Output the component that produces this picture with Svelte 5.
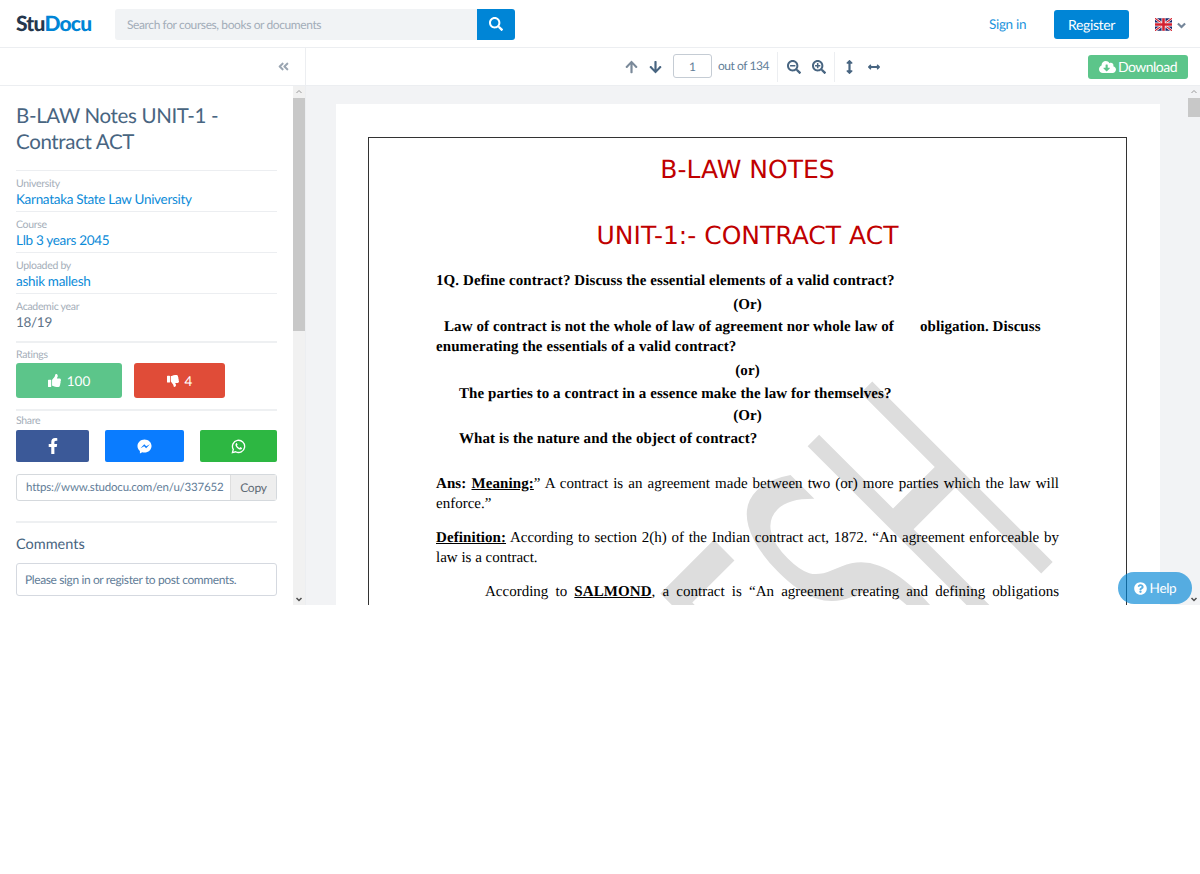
<script lang="ts">
  const details = [
    { label: 'University', value: 'Karnataka State Law University', link: true },
    { label: 'Course', value: 'Llb 3 years 2045', link: true },
    { label: 'Uploaded by', value: 'ashik mallesh', link: true },
    { label: 'Academic year', value: '18/19', link: false }
  ];
  const magnifier =
    'M505 476.7L476.7 505c-9.4 9.4-24.6 9.4-33.9 0L343 405.3c-4.5-4.5-7-10.6-7-17V372c-35.3 27.6-79.7 44-128 44C93.1 416 0 322.9 0 208S93.1 0 208 0s208 93.1 208 208c0 48.3-16.4 92.7-44 128h16.3c6.4 0 12.5 2.5 17 7l99.7 99.7c9.3 9.4 9.3 24.6 0 34zM344 208c0-75.2-60.8-136-136-136S72 132.8 72 208s60.8 136 136 136 136-60.8 136-136z';
</script>

<div class="app">
  <header class="topbar">
    <a class="logo" href="#top"><span>Stu</span><b>Docu</b></a>
    <form class="search">
      <div class="search-input">Search for courses, books or documents</div>
      <button class="search-btn" type="button" aria-label="Search">
        <svg viewBox="0 0 512 512" width="14" height="14"><path fill="#fff" d={magnifier} /></svg>
      </button>
    </form>
    <a class="signin" href="#top">Sign in</a>
    <button class="register" type="button">Register</button>
    <svg class="flag" viewBox="0 0 60 44" width="17" height="13" aria-hidden="true">
      <rect width="60" height="44" fill="#16246a" />
      <path d="M0 0L60 44M60 0L0 44" stroke="#fff" stroke-width="9" />
      <path d="M0 0L60 44M60 0L0 44" stroke="#d3202f" stroke-width="4" />
      <path d="M30 0V44M0 22H60" stroke="#fff" stroke-width="14" />
      <path d="M30 0V44M0 22H60" stroke="#d3202f" stroke-width="9" />
    </svg>
    <svg class="caret" viewBox="0 0 10 7" width="9" height="7" aria-hidden="true">
      <path d="M1 1.2l4 4 4-4" fill="none" stroke="#75869a" stroke-width="2.4" />
    </svg>
  </header>

  <div class="toolbar">
    <div class="tool-side">
      <svg viewBox="0 0 448 512" width="11" height="13"><path fill="#9aa5b1" d="M223.7 239l136-136c9.4-9.4 24.6-9.4 33.9 0l22.6 22.6c9.4 9.4 9.4 24.6 0 33.9L319.9 256l96.4 96.4c9.4 9.4 9.4 24.6 0 33.9L393.7 409c-9.4 9.4-24.6 9.4-33.9 0l-136-136c-9.5-9.4-9.5-24.6-.1-34zm-192 34l136 136c9.4 9.4 24.6 9.4 33.9 0l22.6-22.6c9.4-9.4 9.4-24.6 0-33.9L127.9 256l96.4-96.4c9.4-9.4 9.4-24.6 0-33.9L201.7 103c-9.4-9.4-24.6-9.4-33.9 0l-136 136c-9.5 9.4-9.5 24.6-.1 34z" /></svg>
    </div>
    <div class="tool-main">
      <div class="pager">
        <svg class="up" viewBox="0 0 448 512" width="13" height="14"><path fill="#7b8a9a" d="M34.9 289.5l-22.2-22.2c-9.4-9.4-9.4-24.6 0-33.9L207 39c9.4-9.4 24.6-9.4 33.9 0l194.3 194.3c9.4 9.4 9.4 24.6 0 33.9L413 289.4c-9.5 9.5-25 9.3-34.3-.4L264 168.6V456c0 13.3-10.7 24-24 24h-32c-13.3 0-24-10.7-24-24V168.6L69.2 289.1c-9.3 9.8-24.8 10-34.3.4z" /></svg>
        <svg class="down" viewBox="0 0 448 512" width="13" height="14"><path fill="#486581" d="M413.1 222.5l22.2 22.2c9.4 9.4 9.4 24.6 0 33.9L241 473c-9.4 9.4-24.6 9.4-33.9 0L12.7 278.6c-9.4-9.4-9.4-24.6 0-33.9l22.2-22.2c9.5-9.5 25-9.3 34.3.4L184 343.4V56c0-13.3 10.7-24 24-24h32c13.3 0 24 10.7 24 24v287.4l114.8-120.5c9.3-9.8 24.8-10 34.3-.4z" /></svg>
        <div class="page-input">1</div>
        <span class="page-count">out of 134</span>
      </div>
      <div class="tool-group zoom">
        <svg viewBox="0 0 512 512" width="14" height="14"><path fill="#486581" d="M304 192v32c0 6.6-5.4 12-12 12H124c-6.6 0-12-5.4-12-12v-32c0-6.6 5.4-12 12-12h168c6.6 0 12 5.4 12 12z" /><path fill="#486581" d={magnifier} /></svg>
        <svg viewBox="0 0 512 512" width="14" height="14"><path fill="#486581" d="M304 192v32c0 6.6-5.4 12-12 12h-56v56c0 6.6-5.4 12-12 12h-32c-6.6 0-12-5.4-12-12v-56h-56c-6.6 0-12-5.4-12-12v-32c0-6.6 5.4-12 12-12h56v-56c0-6.6 5.4-12 12-12h32c6.6 0 12 5.4 12 12v56h56c6.6 0 12 5.4 12 12z" /><path fill="#486581" d={magnifier} /></svg>
      </div>
      <div class="tool-group fit">
        <svg viewBox="0 0 256 512" width="7" height="14"><path fill="#486581" d="M214.059 377.941H168V134.059h46.059c21.382 0 32.09-25.851 16.971-40.971L144.971 7.029c-9.373-9.373-24.568-9.373-33.941 0L24.971 93.088c-15.119 15.119-4.411 40.971 16.971 40.971H88v243.882H41.941c-21.382 0-32.09 25.851-16.971 40.971l86.059 86.059c9.373 9.373 24.568 9.373 33.941 0l86.059-86.059c15.12-15.119 4.412-40.971-16.97-40.971z" /></svg>
        <svg viewBox="0 0 512 512" width="12" height="12"><path fill="#486581" d="M377.941 169.941V216H134.059v-46.059c0-21.382-25.851-32.09-40.971-16.971L7.029 239.029c-9.373 9.373-9.373 24.568 0 33.941l86.059 86.059c15.119 15.119 40.971 4.411 40.971-16.971V296h243.882v46.059c0 21.382 25.851 32.09 40.971 16.971l86.059-86.059c9.373-9.373 9.373-24.568 0-33.941l-86.059-86.059c-15.12-15.119-40.971-4.412-40.971 16.97z" /></svg>
      </div>
      <button class="download" type="button">
        <svg viewBox="0 0 640 512" width="17" height="14"><path fill="#fff" d="M537.6 226.6c4.1-10.7 6.4-22.4 6.4-34.6 0-53-43-96-96-96-19.7 0-38.1 6-53.3 16.2C367 64.2 315.3 32 256 32c-88.4 0-160 71.6-160 160 0 2.7.1 5.4.2 8.1C40.2 219.8 0 273.2 0 336c0 79.5 64.5 144 144 144h368c70.7 0 128-57.3 128-128 0-61.9-44-113.6-102.4-125.4zm-132.9 88.7L299.3 420.7c-6.2 6.2-16.4 6.2-22.6 0L171.3 315.3c-10.1-10.1-2.9-27.3 11.3-27.3H248V176c0-8.8 7.2-16 16-16h48c8.8 0 16 7.2 16 16v112h65.4c14.2 0 21.4 17.2 11.3 27.3z" /></svg>
        Download
      </button>
    </div>
  </div>

  <main class="main">
    <aside class="sidebar">
      <div class="side-content">
        <h1>B-LAW Notes UNIT-1 - Contract ACT</h1>
        {#each details as item}
          <div class="detail">
            <small>{item.label}</small>
            {#if item.link}
              <a href="#top">{item.value}</a>
            {:else}
              <span>{item.value}</span>
            {/if}
          </div>
        {/each}

        <div class="section ratings">
          <small>Ratings</small>
          <div class="rating-row">
            <button class="like" type="button">
              <svg viewBox="0 0 512 512" width="13" height="13"><path fill="#fff" d="M104 224H24c-13.255 0-24 10.745-24 24v240c0 13.255 10.745 24 24 24h80c13.255 0 24-10.745 24-24V248c0-13.255-10.745-24-24-24zM384 81.452c0 42.416-25.97 66.208-33.277 94.548h101.723c33.397 0 59.397 27.746 59.553 58.098.084 17.938-7.546 37.249-19.439 49.197l-.11.11c9.836 23.337 8.237 56.037-9.308 79.469 8.681 25.895-.069 57.704-16.382 74.757 4.298 17.598 2.244 32.575-6.148 44.632C440.202 511.587 389.616 512 346.839 512l-2.845-.001c-48.287-.017-87.806-17.598-119.56-31.725-15.957-7.099-36.821-15.887-52.651-16.178-6.54-.12-11.783-5.457-11.783-11.998v-213.77c0-3.2 1.282-6.271 3.558-8.521 39.614-39.144 56.648-80.587 89.117-113.111 14.804-14.832 20.188-37.236 25.393-58.902C282.515 39.293 291.817 0 312 0c24 0 72 8 72 81.452z" /></svg>
              100
            </button>
            <button class="dislike" type="button">
              <svg viewBox="0 0 512 512" width="12" height="12"><path fill="#fff" d="M0 56v240c0 13.255 10.745 24 24 24h80c13.255 0 24-10.745 24-24V56c0-13.255-10.745-24-24-24H24C10.745 32 0 42.745 0 56zm312 456c-20.183 0-29.485-39.293-33.931-57.795-5.206-21.666-10.589-44.07-25.393-58.902-32.469-32.524-49.503-73.967-89.117-113.111a11.98 11.98 0 0 1-3.558-8.521V59.901c0-6.541 5.243-11.878 11.783-11.998 15.831-.29 36.694-9.079 52.651-16.178C256.189 17.598 295.709.017 343.995 0h2.844c42.777 0 93.363.413 113.774 29.737 8.392 12.057 10.446 27.034 6.148 44.632 16.312 17.053 25.063 48.863 16.382 74.757 17.544 23.432 19.143 56.132 9.308 79.469l.11.11c11.893 11.949 19.523 31.259 19.439 49.197-.156 30.352-26.157 58.098-59.553 58.098H350.723C358.03 364.34 384 388.132 384 430.548 384 504 336 512 312 512z" /></svg>
              4
            </button>
          </div>
        </div>

        <div class="section share">
          <small>Share</small>
          <div class="share-row">
            <button class="fb" type="button" aria-label="Facebook">
              <svg viewBox="0 0 320 512" width="10" height="16"><path fill="#fff" d="M279.14 288l14.22-92.66h-88.91v-60.13c0-25.35 12.42-50.06 52.24-50.06h40.42V6.26S260.43 0 225.36 0c-73.22 0-121.08 44.38-121.08 124.72v70.62H22.89V288h81.39v224h100.17V288z" /></svg>
            </button>
            <button class="messenger" type="button" aria-label="Messenger">
              <svg viewBox="0 0 32 32" width="15" height="15"><path fill="#fff" d="M16 1C7.7 1 1 7.2 1 15c0 4.300 2 8 5.200 10.600V31l5-2.800c1.500.4 3.100.7 4.800.7 8.300 0 15-6.200 15-14S24.300 1 16 1z" /><path fill="#0a7cff" d="M7.500 19.500l8-8.500 4.200 4.300 7.800-4.300-8 8.500-4.200-4.300z" /></svg>
            </button>
            <button class="whatsapp" type="button" aria-label="WhatsApp">
              <svg viewBox="0 0 32 32" width="15" height="15"><path fill="none" stroke="#fff" stroke-width="2.800" d="M3 29l1.900-6.700A13 13 0 1 1 10 27.200z" /><path fill="#fff" d="M11.500 8.800c-1.300.6-2.200 2.400-1.900 4.300.5 3.300 5.600 8.800 9.500 9.500 2 .3 3.800-.9 4.200-2.300.2-.6.200-1.100 0-1.300l-3.400-1.700-1.700 1.900c-2.400-.8-4.400-2.700-5.500-5.200l1.400-1.700-1.400-3.400c-.3-.5-1.500-.6-1.900-.1z" /></svg>
            </button>
          </div>
          <div class="copy-field">
            <div class="url">https://www.studocu.com/en/u/337652</div>
            <div class="copy">Copy</div>
          </div>
        </div>

        <div class="section comments">
          <h2>Comments</h2>
          <div class="comment-box">Please sign in or register to post comments.</div>
        </div>
      </div>
      <div class="scrollbar">
        <svg viewBox="0 0 12 12" width="12" height="12"><path d="M3.500 7l2.500-2.500L8.500 7" fill="none" stroke="#9a9a9a" /></svg>
        <div class="thumb side-thumb"></div>
        <svg class="end" viewBox="0 0 12 12" width="12" height="12"><path d="M3.500 5L6 7.500 8.500 5" fill="none" stroke="#505050" stroke-width="1.500" /></svg>
      </div>
    </aside>

    <section class="viewer">
      <div class="page-wrap">
        <article class="page">
          <div class="sheet">
            <div class="watermark" aria-hidden="true">ESH</div>
            <h2 class="doc-title">B-LAW NOTES</h2>
            <h2 class="doc-title unit">UNIT-1:- CONTRACT ACT</h2>
            <div class="copy-text">
              <p class="b q1">1Q. Define contract? Discuss the essential elements of a valid contract?</p>
              <p class="b mid gap4">(Or)</p>
              <p class="b law gap2">Law of contract is not the whole of law of agreement nor whole law of<span class="hole"></span>obligation. Discuss</p>
              <p class="b">enumerating the essentials of a valid contract?</p>
              <p class="b mid gap4">(or)</p>
              <p class="b ind gap3">The parties to a contract in a essence make the law for themselves?</p>
              <p class="b mid gap2">(Or)</p>
              <p class="b ind gap3">What is the nature and the object of contract?</p>
              <p class="just ans"><b>Ans: <u>Meaning:</u></b>” A contract is an agreement made between two (or) more parties which the law will</p>
              <p>enforce.”</p>
              <p class="just gap14"><b><u>Definition:</u></b> According to section 2(h) of the Indian contract act, 1872. “An agreement enforceable by</p>
              <p>law is a contract.</p>
              <p class="just gap14 salmond">According to <b><u>SALMOND</u></b>, a contract is “An agreement creating and defining obligations</p>
            </div>
          </div>
        </article>
      </div>
      <div class="scrollbar page-bar">
        <svg viewBox="0 0 12 12" width="12" height="12"><path d="M3.500 7l2.500-2.500L8.500 7" fill="none" stroke="#9a9a9a" /></svg>
        <div class="thumb view-thumb"></div>
        <svg class="end" viewBox="0 0 12 12" width="12" height="12"><path d="M3.500 5L6 7.500 8.500 5" fill="none" stroke="#505050" stroke-width="1.500" /></svg>
      </div>
      <button class="help" type="button">
        <svg viewBox="0 0 512 512" width="13" height="13"><path fill="#fff" d="M504 256c0 136.997-111.043 248-248 248S8 392.997 8 256C8 119.083 119.043 8 256 8s248 111.083 248 248zM262.655 90c-54.497 0-89.255 22.957-116.549 63.758-3.536 5.286-2.353 12.415 2.715 16.258l34.699 26.310c5.205 3.947 12.621 3.008 16.665-2.122 17.864-22.658 30.113-35.797 57.303-35.797 20.429 0 45.698 13.148 45.698 32.958 0 14.976-12.363 22.667-32.534 33.976C247.128 238.528 216 254.941 216 296v4c0 6.627 5.373 12 12 12h56c6.627 0 12-5.373 12-12v-1.333c0-28.462 83.186-29.647 83.186-106.667 0-58.002-60.165-102-116.531-102zM256 338c-25.365 0-46 20.635-46 46 0 25.364 20.635 46 46 46s46-20.636 46-46c0-25.365-20.635-46-46-46z" /></svg>
        Help
      </button>
    </section>
  </main>
</div>

<style>
  :global(body) {
    background: #fff;
  }
  .app {
    height: 605px;
    overflow: hidden;
    display: flex;
    flex-direction: column;
    font-family: Lato, "Open Sans", sans-serif;
    color: #486581;
    text-rendering: geometricPrecision;
  }
  button {
    font-family: inherit;
    border: 0;
    cursor: pointer;
    text-rendering: geometricPrecision;
  }
  a {
    text-decoration: none;
  }

  .topbar {
    height: 47px;
    flex: none;
    display: flex;
    align-items: center;
    border-bottom: 1px solid #eceef1;
    box-sizing: content-box;
  }
  .logo {
    width: 99px;
    margin-left: 16px;
    font-size: 21px;
    font-weight: 900;
    letter-spacing: -0.8px;
    color: #25374d;
  }
  .logo b {
    color: #0085d6;
    font-weight: 900;
  }
  .search {
    width: 400px;
    height: 31px;
    display: flex;
    margin-top: 1px;
  }
  .search-input {
    flex: 1;
    background: #f1f3f5;
    border-radius: 3px 0 0 3px;
    color: #a3adb9;
    font-size: 12px;
    letter-spacing: -0.4px;
    line-height: 32px;
    padding-left: 12px;
  }
  .search-btn {
    width: 38px;
    background: #0085d6;
    border-radius: 0 3px 3px 0;
    display: grid;
    place-items: center;
    padding: 0;
  }
  .signin {
    margin-left: 474px;
    width: 65px;
    font-size: 13.500px;
    letter-spacing: -0.3px;
    color: #1b93dc;
  }
  .register {
    width: 75px;
    height: 29px;
    margin-top: 1px;
    padding: 0;
    background: #0085d6;
    border-radius: 3px;
    color: #fff;
    font-size: 14px;
    letter-spacing: -0.35px;
  }
  .flag {
    margin-left: 26px;
    margin-top: 1px;
  }
  .caret {
    margin-left: 5px;
    margin-top: 3px;
  }

  .toolbar {
    height: 37px;
    flex: none;
    display: flex;
    border-bottom: 1px solid #eceef1;
    box-sizing: content-box;
  }
  .tool-side {
    width: 305px;
    border-right: 1px solid #eceef1;
    box-sizing: content-box;
    display: flex;
    align-items: center;
    justify-content: flex-end;
  }
  .tool-side svg {
    margin-right: 16px;
  }
  .tool-main {
    flex: 1;
    display: flex;
    align-items: center;
    padding-left: 319px;
  }
  .pager {
    display: flex;
    align-items: center;
    width: 152px;
    flex: none;
  }
  .up {
    margin-right: 11px;
  }
  .down {
    margin-right: 11px;
  }
  .page-input {
    width: 39px;
    height: 24px;
    box-sizing: border-box;
    border: 1px solid #c5ccd4;
    border-radius: 3px;
    text-align: center;
    font-size: 12px;
    line-height: 23px;
    color: #627d98;
    margin-top: -1px;
  }
  .page-count {
    margin-left: 6px;
    font-size: 12px;
    letter-spacing: -0.45px;
    color: #627d98;
    margin-top: -3px;
    white-space: nowrap;
  }
  .tool-group {
    height: 30px;
    border-left: 1px solid #eceef1;
    display: flex;
    align-items: center;
    flex: none;
  }
  .zoom {
    width: 57px;
    padding-left: 9px;
    gap: 11px;
    box-sizing: border-box;
  }
  .fit {
    padding-left: 11px;
    gap: 15px;
    width: 254px;
    box-sizing: border-box;
  }
  .download {
    width: 100px;
    height: 24px;
    padding: 0;
    background: #5cc58a;
    border-radius: 3px;
    color: #fff;
    font-size: 14px;
    letter-spacing: -0.5px;
    display: flex;
    align-items: center;
    justify-content: center;
    gap: 2px;
  }

  .main {
    flex: 1;
    min-height: 0;
    display: flex;
  }
  .sidebar {
    width: 305px;
    flex: none;
    display: flex;
  }
  .side-content {
    width: 293px;
    box-sizing: border-box;
    padding: 17px 16px 0;
  }
  h1 {
    margin: 0 0 15px;
    font-size: 20.500px;
    letter-spacing: -0.35px;
    font-weight: 400;
    line-height: 26px;
    color: #486581;
  }
  .detail {
    height: 41px;
    box-sizing: border-box;
    border-top: 1px solid #eceef1;
    padding-top: 7px;
    display: flex;
    flex-direction: column;
  }
  small {
    display: block;
    font-size: 10.500px;
    letter-spacing: -0.3px;
    line-height: 12px;
    color: #a5aeb9;
  }
  .detail a,
  .detail span {
    font-size: 13.500px;
    letter-spacing: -0.3px;
    line-height: 18px;
    color: #0d8bd8;
  }
  .detail span {
    color: #5f7488;
  }
  .section {
    border-top: 2px solid #eef0f2;
  }
  .ratings {
    margin-top: 7px;
    height: 68px;
    box-sizing: border-box;
    padding-top: 6px;
  }
  .rating-row {
    display: flex;
    gap: 12px;
    margin-top: 2px;
  }
  .rating-row button {
    height: 35px;
    border-radius: 3px;
    color: #fff;
    font-size: 13.500px;
    display: flex;
    align-items: center;
    justify-content: center;
    gap: 6px;
    padding: 0;
  }
  .like {
    width: 106px;
    background: #5cc58a;
  }
  .dislike {
    width: 91px;
    background: #e04c38;
  }
  .share {
    height: 112px;
    box-sizing: border-box;
    padding-top: 4px;
  }
  .share-row {
    display: flex;
    justify-content: space-between;
    margin-top: 3px;
  }
  .share-row button {
    height: 32px;
    border-radius: 2px;
    padding: 0;
    display: grid;
    place-items: center;
  }
  .fb {
    width: 73px;
    background: #3b5998;
  }
  .messenger {
    width: 79px;
    background: #0a7cff;
  }
  .whatsapp {
    width: 77px;
    background: #2db742;
  }
  .copy-field {
    margin-top: 12px;
    height: 27px;
    box-sizing: border-box;
    border: 1px solid #d5d9dd;
    border-radius: 3px;
    display: flex;
    font-size: 11.500px;
    letter-spacing: -0.2px;
    line-height: 25px;
  }
  .url {
    flex: 1;
    padding-left: 9px;
    color: #627d98;
    white-space: nowrap;
    overflow: hidden;
  }
  .copy {
    width: 45px;
    flex: none;
    text-align: center;
    background: #eeeeee;
    border-left: 1px solid #dedede;
    color: #5e6a75;
    font-size: 12px;
  }
  .comments {
    padding-top: 13px;
  }
  .comments h2 {
    margin: 0;
    font-size: 14.500px;
    font-weight: 400;
    line-height: 18px;
    color: #486581;
  }
  .comment-box {
    margin-top: 9px;
    height: 33px;
    box-sizing: border-box;
    border: 1px solid #d5d9e0;
    border-radius: 3px;
    padding-left: 8px;
    font-size: 12px;
    letter-spacing: -0.38px;
    line-height: 31px;
    color: #627d98;
  }

  .scrollbar {
    width: 12px;
    flex: none;
    background: #f1f1f1;
    display: flex;
    flex-direction: column;
  }
  .scrollbar svg {
    flex: none;
  }
  .thumb {
    background: #c8c8c8;
  }
  .side-thumb {
    height: 233px;
  }
  .view-thumb {
    height: 19px;
  }
  .end {
    margin-top: auto;
  }

  .viewer {
    flex: 1;
    min-width: 0;
    background: #f2f3f5;
    border-left: 1px solid #eceef1;
    display: flex;
    position: relative;
  }
  .page-wrap {
    flex: 1;
    padding: 18px 28px 0 30px;
    overflow: hidden;
  }
  .page {
    height: 600px;
    background: #fff;
    padding: 33px 33px 0 32px;
  }
  .page-bar {
    background: #f2f3f5;
  }
  .sheet {
    position: relative;
    height: 600px;
    border: 1px solid #333;
    box-sizing: border-box;
    padding: 17px 67px 0;
    overflow: hidden;
    color: #000;
    font-family: "Liberation Serif", "Times New Roman", serif;
    font-size: 15px;
    line-height: 20px;
  }
  .watermark {
    position: absolute;
    left: 251px;
    top: 438px;
    font-family: "DejaVu Sans", sans-serif;
    font-size: 350px;
    line-height: 1;
    color: #dddddd;
    transform: rotate(-45deg) scaleX(0.47);
    transform-origin: 0 0;
    white-space: nowrap;
  }
  .doc-title {
    position: relative;
    margin: 0;
    font-family: "DejaVu Sans", sans-serif;
    font-size: 25px;
    font-weight: 400;
    line-height: 30px;
    color: #c00000;
    text-align: center;
  }
  .unit {
    margin-top: 36px;
  }
  .copy-text {
    position: relative;
    margin-top: 20px;
  }
  p {
    margin: 0;
  }
  .b,
  p b {
    font-weight: 700;
    letter-spacing: 0.08px;
  }
  .mid {
    text-align: center;
  }
  .gap2 {
    margin-top: 2px;
  }
  .gap3 {
    margin-top: 3px;
  }
  .gap4 {
    margin-top: 4px;
  }
  .gap14 {
    margin-top: 14px;
  }
  .law {
    padding-left: 8px;
  }
  .hole {
    display: inline-block;
    width: 26px;
  }
  .ind {
    padding-left: 23px;
  }
  .ans {
    margin-top: 25px;
  }
  .just {
    text-align: justify;
    text-align-last: justify;
  }
  .salmond {
    padding-left: 49px;
  }
  .help {
    position: absolute;
    left: 812px;
    top: 486px;
    width: 74px;
    height: 32px;
    padding: 0;
    border-radius: 16px;
    background: rgba(0, 133, 214, 0.65);
    color: #fff;
    font-size: 13.500px;
    letter-spacing: -0.3px;
    display: flex;
    align-items: center;
    justify-content: center;
    gap: 3px;
  }
</style>
